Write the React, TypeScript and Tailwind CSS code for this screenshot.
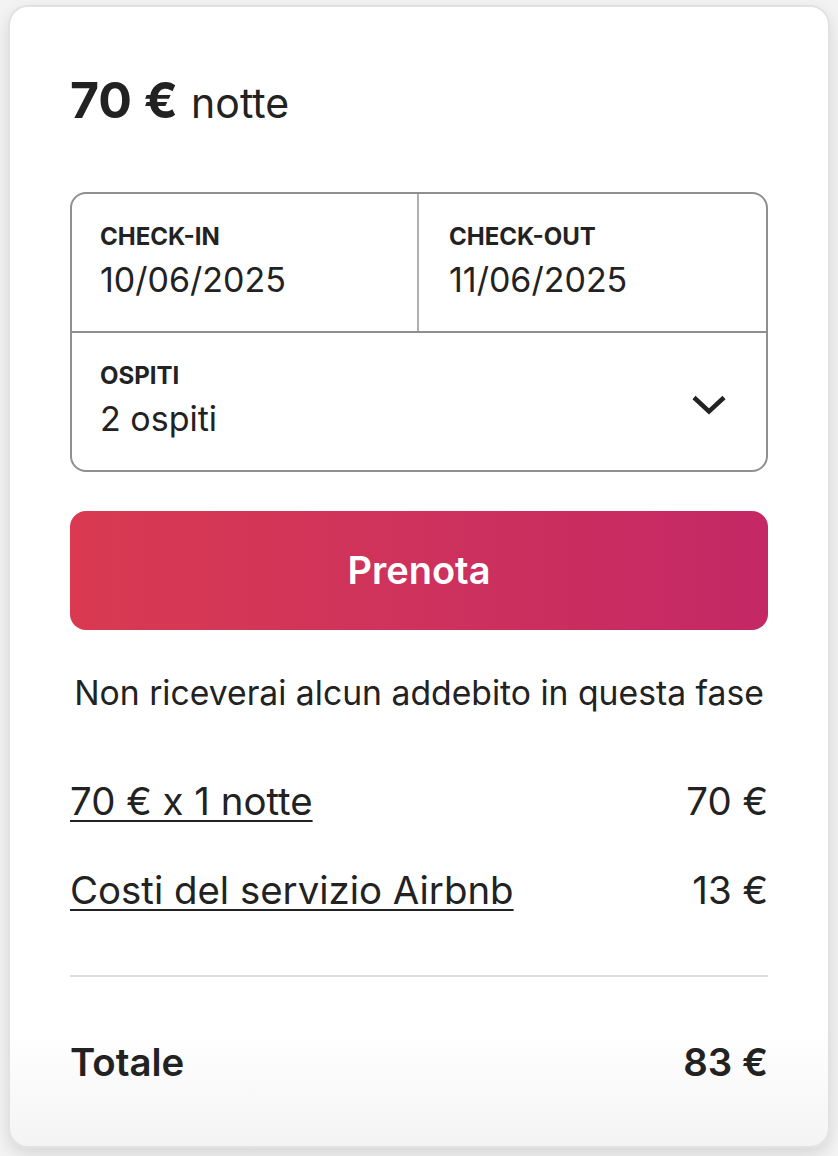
export default function App() {
  return (
    <main
      className="min-h-screen bg-[#f3f3f3] pl-[8px] pt-[5px] text-[#222222]"
      style={{ fontFamily: "Inter, 'Noto Sans', sans-serif" }}
    >
      <section className="w-[822px] h-[1143px] rounded-[20px] border-2 border-[#e2e2e2] bg-[linear-gradient(to_bottom,#ffffff_90%,#f4f4f4)] shadow-[0_6px_16px_rgba(0,0,0,0.12)] px-[60px] pt-[67px]">
        <div className="flex items-baseline gap-[13px] h-[52px]">
          <span className="text-[50px] font-bold leading-[52px]">70 €</span>
          <span className="text-[41px] leading-[52px]">notte</span>
        </div>

        <div className="mt-[66px] rounded-[16px] border-2 border-[#8f8f8f]">
          <div className="grid grid-cols-2 h-[139px] border-b-2 border-[#8f8f8f]">
            <div className="px-[28px] pt-[29px] border-r-2 border-[#b0b0b0]">
              <div className="text-[24px] font-bold leading-[28px]">CHECK-IN</div>
              <div className="text-[34px] leading-[40px] mt-[9px]">10/06/2025</div>
            </div>
            <div className="px-[30px] pt-[29px]">
              <div className="text-[24px] font-bold leading-[28px]">CHECK-OUT</div>
              <div className="text-[34px] leading-[40px] mt-[9px]">11/06/2025</div>
            </div>
          </div>
          <div className="h-[137px] pl-[28px] pr-[39px] pt-[29px] flex justify-between">
            <div>
              <div className="text-[24px] font-bold leading-[28px]">OSPITI</div>
              <div className="text-[34px] leading-[40px] mt-[9px]">2 ospiti</div>
            </div>
            <svg width="36" height="20" viewBox="0 0 36 20" className="mt-[33px]" fill="none" stroke="#222" strokeWidth="4.5">
              <path d="M3 2.5l15 14 15-14" />
            </svg>
          </div>
        </div>

        <button className="mt-[39px] w-full h-[119px] rounded-[16px] bg-gradient-to-r from-[#d93a51] to-[#c42865] text-white text-[38px] font-semibold">
          Prenota
        </button>

        <p className="mt-[43px] text-center text-[33.7px] leading-[40px]">
          Non riceverai alcun addebito in questa fase
        </p>

        <div className="mt-[65px] flex justify-between text-[38.4px] leading-[46px]">
          <span className="underline decoration-2 underline-offset-[5px]">70 € x 1 notte</span>
          <span>70 €</span>
        </div>
        <div className="mt-[43px] flex justify-between text-[38.4px] leading-[46px]">
          <span className="underline decoration-2 underline-offset-[5px]">Costi del servizio Airbnb</span>
          <span>13 €</span>
        </div>

        <div className="mt-[62px] h-[2px] bg-[#dddddd]" />

        <div className="mt-[62px] flex justify-between text-[38.4px] leading-[46px] font-semibold">
          <span>Totale</span>
          <span>83 €</span>
        </div>
      </section>
    </main>
  );
}
